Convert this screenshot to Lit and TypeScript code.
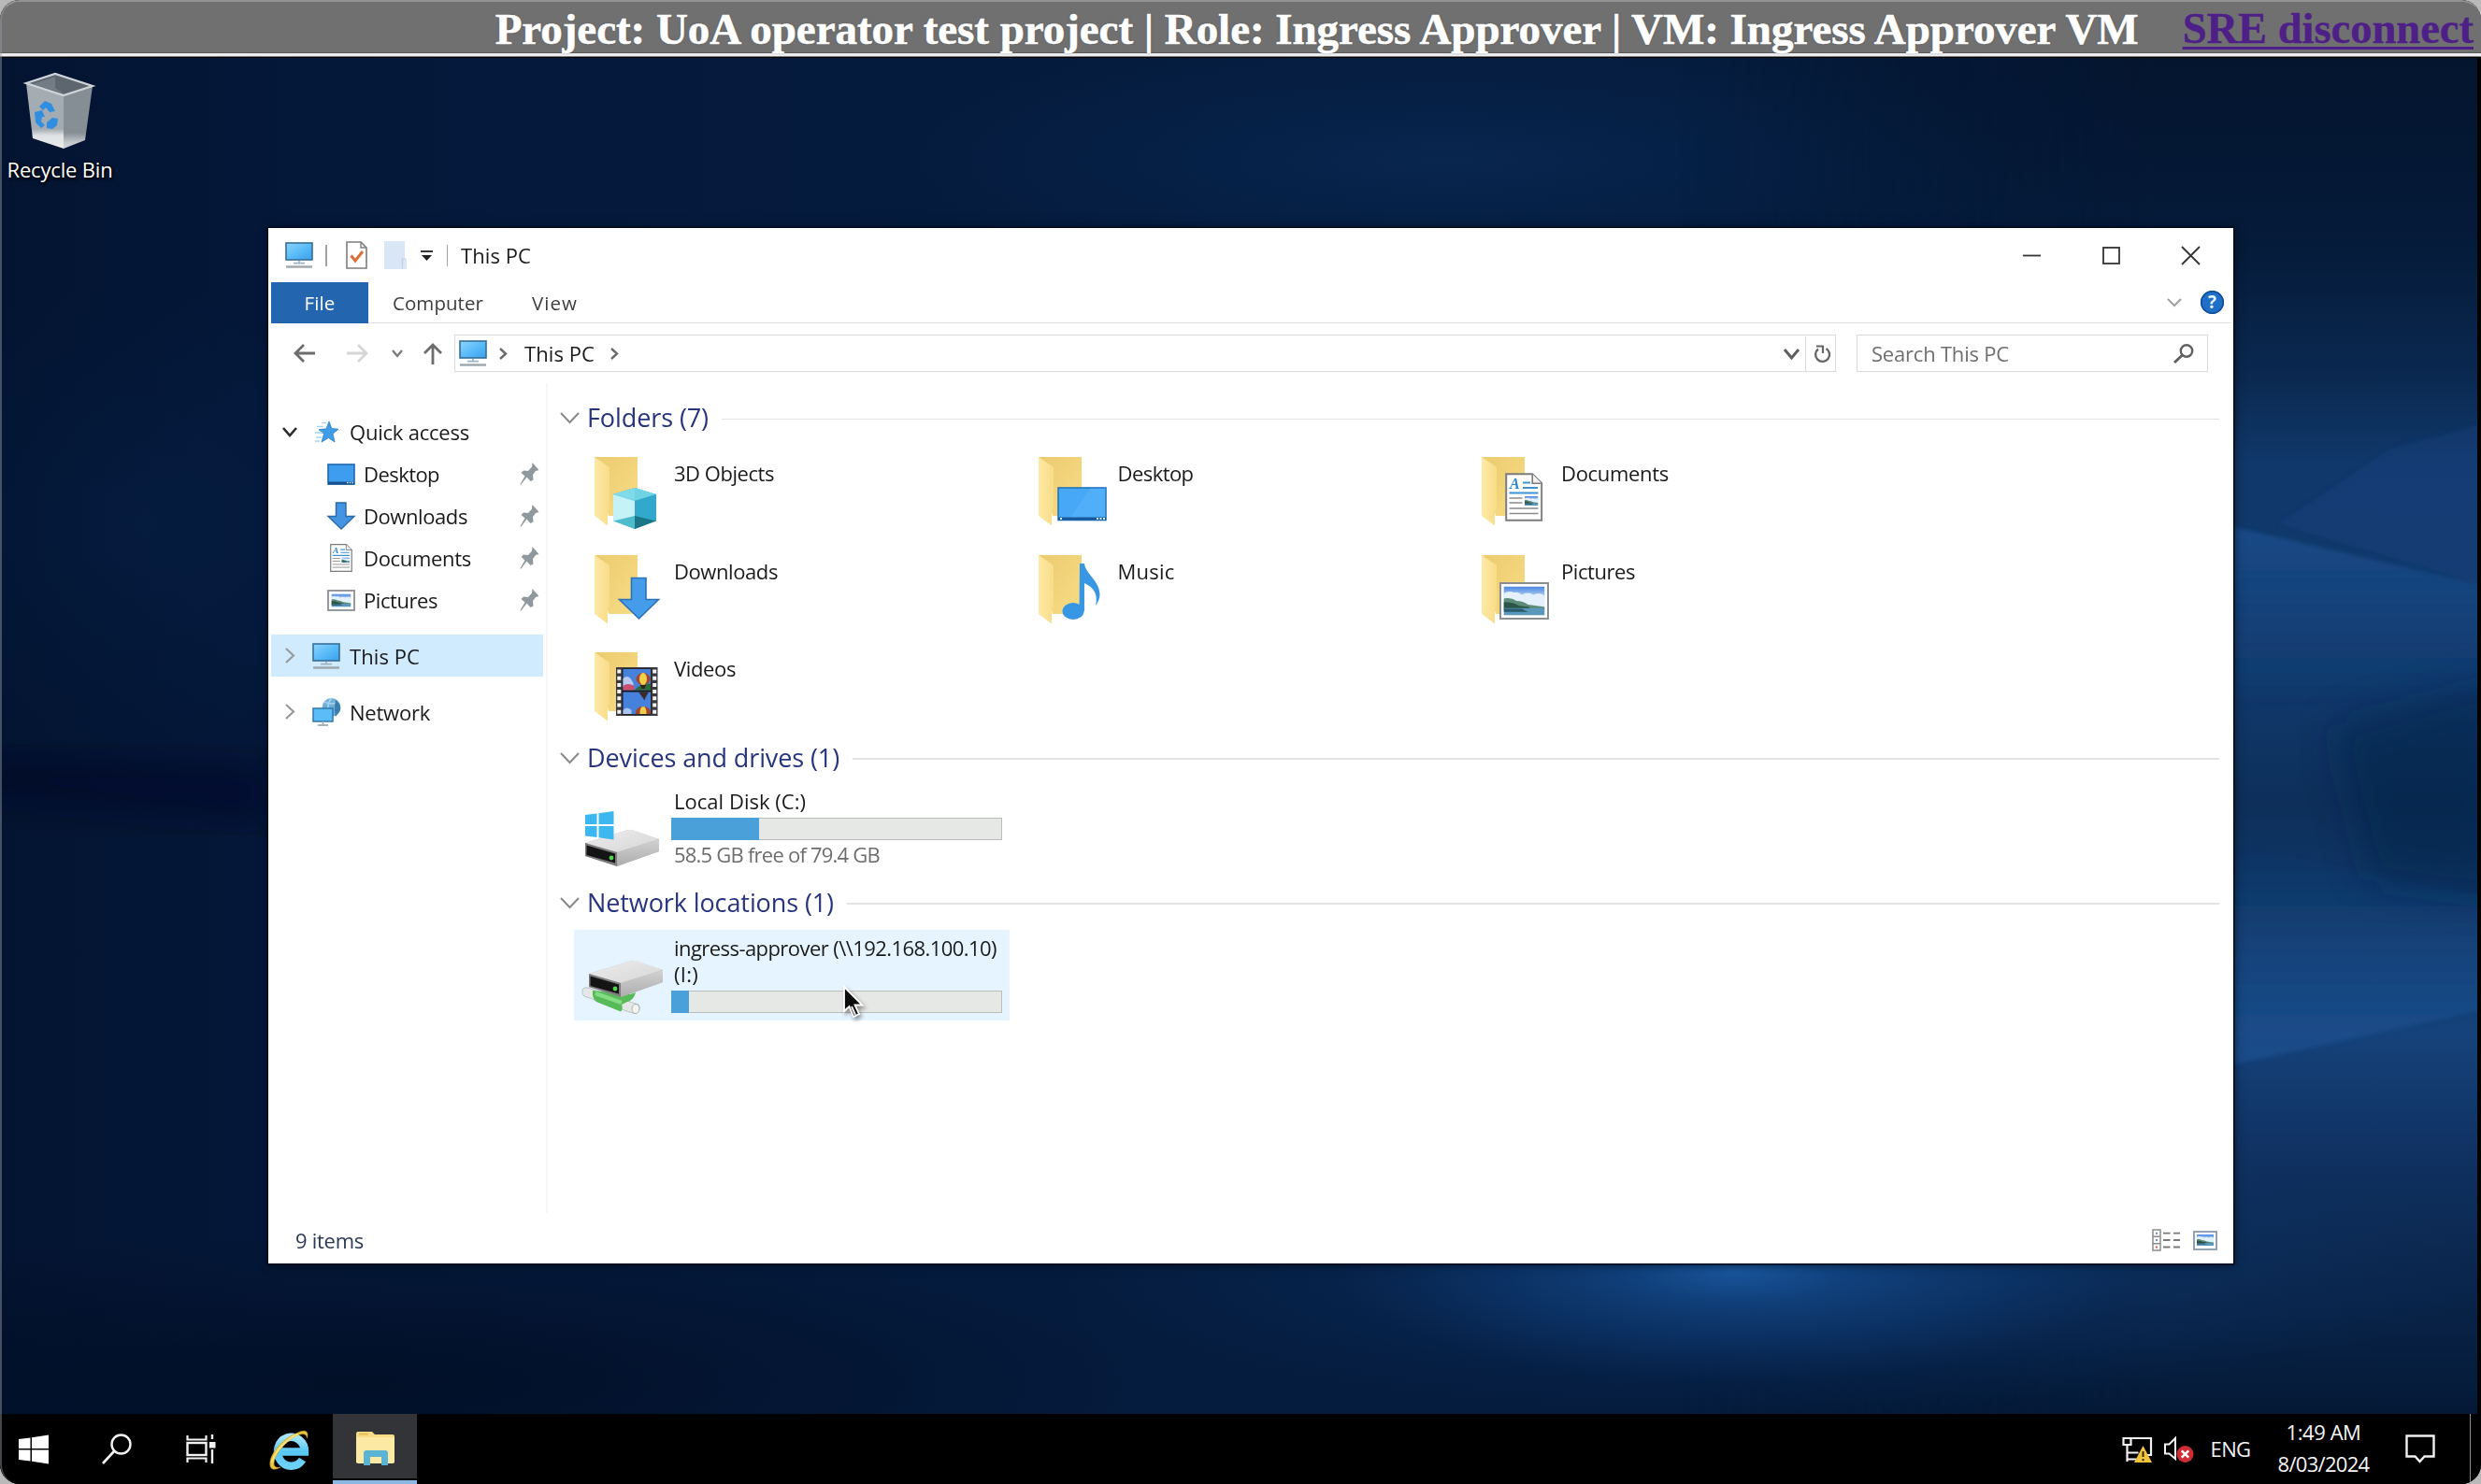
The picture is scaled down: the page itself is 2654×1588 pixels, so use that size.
import { LitElement, html, css, svg, nothing, TemplateResult } from "lit";
import { customElement, property, query } from "lit/decorators.js";

/* Single-line label that spreads its letters to fill a given width. */
@customElement("fit-text")
class FitText extends LitElement {
  @property({ type: Number }) w = 0;
  @property() text = "";
  @query(".t") el!: HTMLSpanElement;
  static styles = css`
    :host { display: inline-block; white-space: pre; }
    .t { display: inline-block; }
  `;
  firstUpdated() {
    const natural = this.el.getBoundingClientRect().width;
    if (this.w && natural) this.el.style.letterSpacing = `${(this.w - natural) / this.text.length}px`;
  }
  render() {
    return html`<span class="t">${this.text}</span>`;
  }
}

const fit = (text: string, w: number) => html`<fit-text .text=${text} .w=${w}></fit-text>`;

const icon = (w: number, h: number, body: unknown, vb = `0 0 ${w} ${h}`) =>
  html`<svg width=${w} height=${h} viewBox=${vb} fill="none" preserveAspectRatio="none" style="display:block;flex:none;overflow:visible">${body}</svg>`;

const pc = () => icon(30, 28, svg`
  <defs><linearGradient id="scr" x1="0" y1="0" x2="1" y2="1"><stop offset="0" stop-color="#8fd4fd"/><stop offset=".5" stop-color="#5bbcf8"/><stop offset="1" stop-color="#3aa0ec"/></linearGradient></defs>
  <rect x="1" y="1" width="28" height="18" fill="url(#scr)" stroke="#356f97" stroke-width="1.6"/>
  <path d="M15 20v2.500M9 22.600h12" stroke="#9fb4c2" stroke-width="1.800"/>
  <path d="M1 26.500h28" stroke="#9ba6ae" stroke-width="2.400"/>`);

const chevDown = (w: number, h: number, c: string, s: number) =>
  icon(w, h, svg`<path d="M1 1L${w / 2} ${h - 1}L${w - 1} 1" stroke=${c} stroke-width=${s}/>`);
const chevRight = (w: number, h: number, c: string, s: number) =>
  icon(w, h, svg`<path d="M1 1L${w - 1} ${h / 2}L1 ${h - 1}" stroke=${c} stroke-width=${s}/>`);

const arrow = (c: string, flip = false) =>
  icon(24, 20, svg`<path transform=${flip ? "translate(24 0) scale(-1 1)" : ""} d="M23 10H2M11 1L2 10l9 9" stroke=${c} stroke-width="2.800"/>`);

const landscape = (x: number, y: number, w: number, h: number) => svg`
  <svg x=${x} y=${y} width=${w} height=${h} viewBox="0 0 32 24" preserveAspectRatio="none">
    <defs><linearGradient id="sky" x1="0" y1="0" x2="0" y2="1"><stop offset="0" stop-color="#4a86e0"/><stop offset=".45" stop-color="#cfe6fa"/></linearGradient></defs>
    <rect width="32" height="24" fill="url(#sky)"/>
    <path d="M0 6q4-3 8-1q4-1 6 2q5-3 9 0q5-3 9 1v8H0z" fill="#e4f1fc"/>
    <path d="M0 10q6-1 10 2q5 0 9 3l13 2v2H0z" fill="#5d8c76"/>
    <path d="M0 13q8 0 12 3l8 1v2H0z" fill="#2c5548"/>
    <rect y="18" width="32" height="6" fill="#5a97bb"/><path d="M0 18.500h14l5 2.500H0z" fill="#2b5a6c"/>
  </svg>`;

const docBody = svg`
  <path d="M1.200 1.200h28l10 10v39.600h-38z" fill="#fff" stroke="#7c7c7c" stroke-width="2"/>
  <path d="M29.200 1.200v10h10" fill="#f0f0f0" stroke="#7c7c7c" stroke-width="1.600"/>
  <text x="5" y="17" font-family="Liberation Serif, serif" font-style="italic" font-weight="bold" font-size="16" fill="#2a86cf">A</text>
  <path d="M19 10.500h8M19 16h16M4.500 21.500h31" stroke="#3d93d3" stroke-width="2"/>
  <path d="M4.500 27h14M4.500 32h14M4.500 38h31M4.500 43.500h31" stroke="#8b8b8b" stroke-width="1.500"/>
  ${landscape(21, 25, 14.5, 10)}`;

const overlays: Record<string, unknown> = {
  "3D Objects": svg`
    <path d="M43 34L66 41V69L43 78 20 69V41z" fill="#38b4cf"/>
    <path d="M43 34L66 41 43 48 20 41z" fill="#6fd3e4"/>
    <path d="M20 41L43 48V66L20 70z" fill="#c5f2f6"/>
    <path d="M43 34L20 41 43 47z" fill="#7fdbe8"/>
    <path d="M66 41L43 48V64L66 70z" fill="#32a9cc"/>
    <path d="M20 69.500L43 64V78z" fill="#4fbccb"/><path d="M66 69.500L43 64V78z" fill="#197587"/>`,
  Desktop: svg`
    <rect x="21" y="34" width="51" height="34.500" fill="#46a8f6" stroke="#2273b8" stroke-width="1.600"/>
    <path d="M34 66L55 34.800h16.400V66z" fill="#5ab4fa" opacity=".55"/>
    <path d="M21 67h51" stroke="#17599a" stroke-width="3"/><path d="M62 67h9" stroke="#d5ecff" stroke-width="2" stroke-dasharray="2 1.500"/><path d="M23 67h2" stroke="#d5ecff" stroke-width="2"/>`,
  Documents: svg`<svg x="25" y="18" width="40.500" height="52" viewBox="0 0 40.500 52">${docBody}</svg>`,
  Downloads: svg`<path d="M39.500 25.500h15.500v23h13.500L47.500 69 26.500 48.500h13z" fill="#459ceb" stroke="#2d71b5" stroke-width="1.600"/>`,
  Music: svg`<ellipse cx="37" cy="61" rx="11.500" ry="9" fill="#3797e4"/><path d="M44 10h5C50 21 65 28 65.500 43q0 6-4.500 12Q65 38 49 31V61H43.500z" fill="#3797e4"/>`,
  Pictures: svg`<rect x="20" y="31" width="51" height="38" fill="#fff" stroke="#8b8f94" stroke-width="2"/>${landscape(23.500, 34.500, 44, 31)}`,
  Videos: svg`
    <rect x="23" y="17" width="44.500" height="52" fill="#3a3a3e"/>
    <path d="M26.300 19.500V68M64.200 19.500V68" stroke="#f2f2f2" stroke-width="4" stroke-dasharray="4 3.200"/>
    <rect x="29.500" y="18.500" width="31" height="49" fill="#15151a"/>
    <rect x="30.500" y="19" width="29.500" height="22.500" fill="#4682dc"/><rect x="30.500" y="43.500" width="29.500" height="23.500" fill="#4682dc"/>
    <path d="M30.500 29q4-4 8 0l3 5v4h-11z" fill="#b9c9f0"/><path d="M30.500 37q5-4 12 0v4.500h-12z" fill="#c8506a"/><path d="M43 41.500q6-8 17-7v7z" fill="#2e6b3c"/>
    <ellipse cx="52" cy="29.500" rx="7.500" ry="6.500" fill="#a8442c"/><ellipse cx="52" cy="29.500" rx="4" ry="6.500" fill="#f0d04a"/><path d="M49 36h6l-1.500 4h-3z" fill="#2f2418"/>
    <path d="M47 43.500h11l-3.500 6-1 3-2-3z" fill="#3b2a2c"/>
    <path d="M30.500 63q4-5 9 0v4h-9z" fill="#a9c4f2"/><path d="M44 67q0-8 8-8t8 8z" fill="#a8442c"/><path d="M48.500 67q0-8 3.500-8t3.500 8z" fill="#f0d04a"/>`,
};

const folder = (name: string) => icon(80, 80, svg`
  <defs>
    <linearGradient id="fb" x1="0" y1="0" x2="1" y2="1"><stop offset="0" stop-color="#eccb70"/><stop offset="1" stop-color="#f7dc85"/></linearGradient>
    <linearGradient id="ff" x1="0" y1="0" x2="1" y2="0"><stop offset="0" stop-color="#fde9a6"/><stop offset="1" stop-color="#f8dd88"/></linearGradient>
  </defs>
  <path d="M0 1H46V64H15z" fill="url(#fb)"/>
  <path d="M0 1L16 12V56l-2 4v14.500L0 64z" fill="url(#ff)"/>
  ${overlays[name]}`);

const driveBody = svg`
  <defs><linearGradient id="dt" x1="0" y1="0" x2="1" y2="1"><stop offset="0" stop-color="#ededed"/><stop offset="1" stop-color="#d6d6d6"/></linearGradient>
  <linearGradient id="ds" x1="0" y1="0" x2="0" y2="1"><stop offset="0" stop-color="#d2d2d2"/><stop offset="1" stop-color="#adadad"/></linearGradient></defs>
  <path d="M0 14L46 0 79 10V23L34 39 0 28z" fill="#b4b4b4"/>
  <path d="M0 14L46 0Q50 -1 54 1L79 10 34 24z" fill="url(#dt)"/>
  <path d="M34 24L79 10V23L34 39z" fill="url(#ds)"/>
  <path d="M0 14L34 24V39L0 28z" fill="#7c7c7c"/>
  <path d="M1.500 16.500L32 25.500V35.500L1.500 27z" fill="#141414"/>
  <circle cx="28" cy="30" r="2.400" fill="#4fd64a"/>`;

const localDrive = icon(80, 60, svg`
  <g transform="translate(0 20)">${driveBody}</g>
  <path d="M0 4L12.500 2.500V14H0zM14.500 2.200L30.500 0V14H14.500zM0 16h12.500V28L0 26.500zM14.500 16h16V30.500L14.500 28.300z" fill="#3cb7ef"/>`);

const netDrive = icon(88, 58, svg`
  <path d="M1 31q1-3 6-2l54 18q3 5-2 9-3 1-6-.5L3 38q-3-2-2-7z" fill="#e4e8e6" stroke="#bcc3bf" stroke-width="1"/>
  <path d="M12 32l40 4 6-2q-2 8-9 10l-6 3q2 5-1 7.500L16 44q-5-4-4-12z" fill="#56bb58"/><path d="M15 35l28 10" stroke="#86dc84" stroke-width="4"/>
  <ellipse cx="58" cy="51.500" rx="4" ry="5" fill="#f4f6f5" stroke="#a9b0ac"/>
  <g transform="translate(8 0)">${driveBody}</g>`);

const pin = icon(21, 26, svg`<path d="M13.500 1l7 8-3.500 1-3 4 .500 5.500-3 1.500-4-4.500L1 25l-.5-1 5-8.500L1.500 12 4 9.500l5 .500 4-4.500z" fill="#8f989c"/>`);

const nav: Record<string, TemplateResult> = {
  Desktop: icon(30, 23, svg`<rect x="1" y="1" width="28" height="21" fill="#3f9df0" stroke="#1f68ae" stroke-width="1.600"/><path d="M1 21h28" stroke="#16508c" stroke-width="3"/><path d="M21 20.500h7" stroke="#cfe8ff" stroke-width="1.500" stroke-dasharray="1.500 1.200"/>`),
  Downloads: icon(30, 30, svg`<path d="M9.500 1h10.500v14.500h9L15 29 1 15.500h8.500z" fill="#4594e4" stroke="#2c69a8" stroke-width="1.400"/>`),
  Documents: icon(24, 30, docBody, "0 0 40.500 52"),
  Pictures: icon(30, 23, svg`<rect x="1" y="1" width="28" height="21" fill="#fff" stroke="#8b8f94" stroke-width="1.800"/>${landscape(4.5, 4.5, 21, 14)}`),
};

const star = icon(26, 22, svg`<path d="M16 0l2.800 7.500L26 8.200l-6 5L22 22 15.500 17.500 8 22l2.500-8.500L5 8.600l8-.8z" fill="#3f9ce6" stroke="#2b7dc4" stroke-width=".8"/><path d="M3 5.500h7M1 12h8M2 17h6M8 1.500h5M1 21h5" stroke="#a5d5f5" stroke-width="1.400"/>`);

const network = icon(31, 31, svg`
  <circle cx="20.500" cy="11" r="10" fill="#6fb0d8"/><path d="M20.500 1q-7 9 0 20M13 5q8 4 15 0" stroke="#a9d5ee" stroke-width="1.500"/><path d="M25 3q6 4 5 11l-5 7q-2-8 0-18z" fill="#3c7fae"/>
  <rect x="1" y="12" width="21" height="14" fill="#5bbcf8" stroke="#2f77a8" stroke-width="1.500"/><path d="M11.500 26v3M6 30h11" stroke="#a8b4bb" stroke-width="2"/>`);

const recycleBin = icon(74, 82, svg`
  <defs><linearGradient id="b1" x1="0" y1="0" x2="0" y2="1"><stop offset="0" stop-color="#a5adb3"/><stop offset=".7" stop-color="#a2abb1"/><stop offset=".8" stop-color="#dfe2e4"/><stop offset="1" stop-color="#e8eaeb"/></linearGradient>
  <linearGradient id="b2" x1="0" y1="0" x2="0" y2="1"><stop offset="0" stop-color="#858e95"/><stop offset=".75" stop-color="#868f96"/><stop offset=".9" stop-color="#c4c8cb"/><stop offset="1" stop-color="#d5d8da"/></linearGradient></defs>
  <path d="M1 11L32 1 72 14 41 24z" fill="#5d666e"/><path d="M8 12L32 4v12l9 6z" fill="#737c84"/>
  <path d="M1 11L41 24V81L8 70z" fill="url(#b1)"/><path d="M72 14L41 24V81L64 72z" fill="url(#b2)"/>
  <path d="M1 11L32 1 72 14 41 24z" stroke="#cfd4d8" stroke-width="2.200"/>
  <path d="M15 36l6-6 7 3 4 8-6 1-4-5-3 3z" fill="#2f8ee0"/>
  <path d="M10 42l8-2 3 7-3 0-1 5 4 4-4 3-6-6z" fill="#2f8ee0"/>
  <path d="M23 53l6-5 6 1-1 7-5 4-6-1z" fill="#2f8ee0"/>`);

interface Drive { lines: string[]; widths: number[]; used: number; free?: string; icon: TemplateResult; hot?: boolean }

@customElement("drive-tile")
class DriveTile extends LitElement {
  @property({ attribute: false }) drive!: Drive;
  static styles = css`
    :host { display: block; }
    .tile { box-sizing: border-box; width: 466px; height: 97px; display: flex; font-size: 22px; line-height: 28px; color: #1a1a1a; }
    .hot { background: #e5f4fe; }
    .pic { width: 104px; padding-left: 12px; padding-top: 28px; box-sizing: border-box; flex: none; }
    .hot .pic { padding-left: 8px; padding-top: 33px; }
    .info { width: 354px; padding-top: 3px; }
    .hot .info { padding-top: 5px; }
    .line { height: 28px; padding-left: 3px; }
    .bar { box-sizing: border-box; height: 24px; margin-top: 4px; border: 1.5px solid #bcbcbc; background: #e6e8e5; display: flex; }
    .fill { background: #4aa1d9; margin: -1px 0 -1px -1px; }
    .free { color: #6d6d6d; padding: 1px 0 0 3px; height: 28px; }
  `;
  render() {
    const d = this.drive;
    return html`<div class="tile ${d.hot ? "hot" : ""}">
      <div class="pic">${d.icon}</div>
      <div class="info">
        ${d.lines.map((l, i) => html`<div class="line">${fit(l, d.widths[i])}</div>`)}
        <div class="bar"><div class="fill" style="width:${d.used}%"></div></div>
        ${d.free ? html`<div class="free">${fit(d.free, 220)}</div>` : nothing}
      </div>
    </div>`;
  }
}

const group = (title: string, w: number) => html`<div class="group">
  ${chevDown(21, 12, "#8a8a8a", 2)}<span class="gtitle">${fit(title, w)}</span><span class="rule"></span></div>`;

const wallpaper = html`<svg class="wall" viewBox="0 61 2654 1452" preserveAspectRatio="none">
  <defs>
    <linearGradient id="base" x1="0" y1="0" x2="1" y2="0">
      <stop offset="0" stop-color="#031431"/><stop offset=".12" stop-color="#04183a"/><stop offset=".5" stop-color="#051c3e"/><stop offset="1" stop-color="#051c3d"/>
    </linearGradient>
    <linearGradient id="east" x1="0" y1="0" x2="0" y2="1">
      <stop offset="0" stop-color="#04152e"/><stop offset=".14" stop-color="#051b3a"/><stop offset=".23" stop-color="#0a284f"/><stop offset=".3" stop-color="#10386a"/><stop offset=".45" stop-color="#113a6d"/><stop offset=".55" stop-color="#0d2f5a"/><stop offset=".64" stop-color="#113a6c"/><stop offset=".72" stop-color="#15427a"/><stop offset=".8" stop-color="#103364"/><stop offset=".88" stop-color="#0b2850"/><stop offset="1" stop-color="#041936"/>
    </linearGradient>
    <linearGradient id="fade" x1="0" y1="0" x2="1" y2="0"><stop offset="0" stop-color="#000"/><stop offset="1" stop-color="#fff"/></linearGradient>
    <mask id="em" maskUnits="userSpaceOnUse" x="1800" y="61" width="854" height="1452"><rect x="1800" y="61" width="500" height="1452" fill="url(#fade)"/><rect x="2300" y="61" width="354" height="1452" fill="#fff"/></mask>
    <linearGradient id="beam" x1="0" y1="0" x2="0" y2="1"><stop offset="0" stop-color="#20569a" stop-opacity=".6"/><stop offset="1" stop-color="#1c5090" stop-opacity="0"/></linearGradient>
    <linearGradient id="beam2" x1="0" y1="1" x2="0" y2="0"><stop offset="0" stop-color="#1f5698" stop-opacity=".6"/><stop offset="1" stop-color="#1c5090" stop-opacity="0"/></linearGradient>
    <radialGradient id="glow"><stop offset="0" stop-color="#1f63b0" stop-opacity=".95"/><stop offset=".3" stop-color="#154c8e" stop-opacity=".6"/><stop offset="1" stop-color="#0c3a78" stop-opacity="0"/></radialGradient>
    <radialGradient id="soft"><stop offset="0" stop-color="#134a8c" stop-opacity=".85"/><stop offset="1" stop-color="#0c3a78" stop-opacity="0"/></radialGradient>
    <radialGradient id="dark"><stop offset="0" stop-color="#010d22" stop-opacity=".8"/><stop offset="1" stop-color="#010d22" stop-opacity="0"/></radialGradient>
    <filter id="blur" x="-20%" y="-20%" width="140%" height="140%"><feGaussianBlur stdDeviation="20"/></filter>
    <filter id="blur3" x="-5%" y="-5%" width="110%" height="110%"><feGaussianBlur stdDeviation="2"/></filter>
  </defs>
  <rect y="61" width="2654" height="1452" fill="url(#base)"/>
  <ellipse cx="1550" cy="170" rx="620" ry="130" fill="url(#soft)" opacity=".25"/>
  <ellipse cx="150" cy="560" rx="330" ry="260" fill="url(#soft)" opacity=".12"/>
  <g filter="url(#blur)">
    <path d="M-40 810L290 820V880L-40 850z" fill="#010c20" opacity=".5"/>
  </g>
  <rect x="1800" y="61" width="854" height="1452" fill="url(#east)" mask="url(#em)"/>
  <g filter="url(#blur3)">
    <path d="M2380 560L2670 628V740L2380 760z" fill="url(#beam)"/>
    <path d="M2440 560L2560 480 2670 450V628z" fill="#174684" opacity=".35"/>
    <path d="M2380 1142L2670 1078V960L2380 900z" fill="url(#beam2)"/>
  </g>
  <g filter="url(#blur)"><path d="M2500 780L2680 730V960L2540 940z" fill="#082346" opacity=".5"/></g>
  <ellipse cx="1860" cy="1360" rx="420" ry="120" fill="url(#glow)"/>
  <ellipse cx="1900" cy="1360" rx="760" ry="150" fill="url(#soft)" opacity=".55"/>
  <ellipse cx="380" cy="1480" rx="860" ry="160" fill="url(#dark)"/>
</svg>`;

@customElement("app-root")
class AppRoot extends LitElement {
  static styles = css`
    :host { display: block; width: 2654px; height: 1588px; background: #b9b9b9; }
    svg { display: block; flex: none; }
    .frame { position: relative; width: 2654px; height: 1588px; display: flex; flex-direction: column; overflow: hidden; border-radius: 21px; background: #000; font-family: "Open Sans", "Noto Sans", sans-serif; font-size: 22px; line-height: 30px; color: #1a1a1a; }
    .edge { position: absolute; inset: 0; border-radius: 21px; border-left: 2px solid rgba(150, 155, 165, .45); border-top: 2px solid rgba(170, 170, 170, .6); box-sizing: border-box; pointer-events: none; }
    .top { box-sizing: border-box; height: 61px; background: #707070; border-bottom: 1px solid #777; display: flex; justify-content: flex-end; align-items: flex-start; padding-right: 8px; box-shadow: inset 0 -3px 0 #ededf1, inset 0 -4px 0 #5a5a5a; font: bold 47px/62px "Liberation Serif", serif; color: #fff; gap: 47px; text-shadow: 0 0 2px rgba(60, 60, 60, .7); flex: none; }
    .top .heading { -webkit-text-stroke: .6px #fff; }
    .link { color: #4e1f87; -webkit-text-stroke: .4px #4e1f87; text-shadow: none; text-decoration: underline; text-decoration-thickness: 3px; text-underline-offset: 4px; font-size: 46.500px; }
    .desk { position: relative; height: 1452px; flex: none; margin-right: 4px; overflow: hidden; border-top: 1px solid #000; box-sizing: border-box; }
    .wall { position: absolute; left: 0; top: 0; width: 100%; height: 100%; }
    .bin { position: relative; width: 128px; padding-top: 16px; display: flex; flex-direction: column; align-items: center; gap: 5px; color: #fff; text-shadow: 1px 2px 3px #000, 0 0 3px #000; line-height: 32px; }
    .win { position: absolute; left: 287px; top: 182px; width: 2102px; height: 1108px; background: #fff; display: flex; flex-direction: column; box-shadow: 0 0 0 1.5px #020a1c, 1px 1px 10px rgba(0, 0, 0, .6); }
    .title { height: 58px; flex: none; display: flex; align-items: center; padding: 0 3px 0 18px; }
    .vsep { width: 1.5px; height: 23px; background: #a2a2a2; }
    .spacer { flex: 1; }
    .ctl { width: 85px; display: flex; justify-content: center; }
    .ribbon { height: 44px; flex: none; box-sizing: border-box; display: flex; align-items: center; border-bottom: 1.5px solid #dcdddd; margin: 0 3px; padding-right: 7px; font-size: 20.500px; color: #3d3d3d; }
    .file { width: 104px; height: 44px; background: #2465b0; color: #fff; display: flex; align-items: center; justify-content: center; margin-right: 26px; }
    .help { width: 25px; height: 25px; border-radius: 50%; background: #1f6fc6; box-shadow: inset 0 0 0 1.5px #0c4c9a; color: #e9f5ff; font: bold 19px/25px "Open Sans", sans-serif; text-align: center; margin-left: 20px; }
    .nav { height: 64px; flex: none; display: flex; align-items: center; padding: 0 25px 0 27px; }
    .box { box-sizing: border-box; height: 40px; border: 1.5px solid #d9d9d9; display: flex; align-items: center; }
    .addr { width: 1478px; margin-left: 12px; padding-left: 4px; }
    .addr .div { width: 1.5px; height: 37px; background: #d9d9d9; margin: 0 9px 0 6px; }
    .search { width: 376px; margin-left: 22px; padding: 0 14px 0 15px; color: #6f6f6f; justify-content: space-between; }
    .body { flex: 1; display: flex; min-height: 0; }
    .side { width: 299px; flex: none; box-sizing: border-box; border-right: 2px solid #f6f6f6; padding: 30px 0 0 3px; display: flex; flex-direction: column; height: 888px; }
    .row { height: 44.900px; width: 291px; box-sizing: border-box; display: flex; align-items: center; }
    .row .tw { width: 18px; margin-left: 11px; display: flex; justify-content: center; }
    .row .ic { width: 32px; display: flex; justify-content: center; }
    .row.lead .ic { margin-left: 14px; margin-right: 9px; }
    .row.child { padding-left: 59px; padding-right: 4px; }
    .row.child .ic { margin-right: 8px; }
    .row.gap { margin-top: 15px; }
    .row.sel { background: #cfebfd; }
    .main { flex: 1; padding: 15px 15px 0 13px; }
    .group { height: 44px; display: flex; align-items: center; }
    .gtitle { font-size: 27px; line-height: 44px; color: #27357f; margin: 0 14px 0 8px; }
    .rule { flex: 1; height: 1.500px; background: #e3e3e3; margin-top: 3px; }
    .grid { display: grid; grid-template-columns: repeat(3, 474.500px); grid-auto-rows: 104.500px; padding-left: 15px; margin-bottom: 6px; }
    .tile { display: flex; padding: 19px 0 0 22px; }
    .tile .name { margin: 3px 0 0 5px; }
    .drives { padding: 7px 0 7px 15px; }
    .status { height: 48px; flex: none; display: flex; align-items: center; padding: 0 17px 2px 29px; box-sizing: border-box; gap: 13px; color: #2b3a55; }
    .cursor { position: absolute; left: 902px; top: 993px; filter: drop-shadow(2px 3px 2px rgba(0, 0, 0, .4)); }
    .task { height: 75px; flex: none; background: #000; display: flex; color: #f4f4f4; align-items: center; }
    .app { width: 90px; height: 75px; display: flex; align-items: center; justify-content: center; }
    .app.on { position: relative; background: #333438; box-sizing: border-box; border-bottom: 4px solid #8cb7e3; box-shadow: inset 0 -2px 0 #000; padding-top: 3px; }
    .tray { display: flex; align-items: center; }
    .clock { width: 130px; text-align: center; line-height: 34px; margin: 0 22px 3px 13px; }
    .lang { margin-bottom: 2px; }
    .peek { width: 1.500px; height: 75px; background: #8b8b8b; margin: 0 11px 0 37px; }
  `;

  private child(name: string, w: number) {
    return html`<div class="row child"><span class="ic">${nav[name]}</span>${fit(name, w)}<span class="spacer"></span>${pin}</div>`;
  }

  render() {
    const folders: [string, number][] = [["3D Objects", 107], ["Desktop", 81], ["Documents", 115], ["Downloads", 111], ["Music", 61], ["Pictures", 79], ["Videos", 66]];
    const local: Drive = { lines: ["Local Disk (C:)"], widths: [141], used: 26.8, free: "58.5 GB free of 79.4 GB", icon: localDrive };
    const net: Drive = { lines: ["ingress-approver (\\\\192.168.100.10)", "(I:)"], widths: [345, 26], used: 5.5, icon: netDrive, hot: true };
    return html`<div class="frame">
      <div class="top">
        <span class="heading">${fit("Project: UoA operator test project | Role: Ingress Approver | VM: Ingress Approver VM", 1758)}</span>
        <span class="link">SRE disconnect</span>
      </div>
      <div class="desk">
        ${wallpaper}
        <div class="bin">${recycleBin}${fit("Recycle Bin", 113)}</div>
        <div class="win">
          <div class="title">
            ${pc()}
            <span class="vsep" style="margin:0 20px 0 13px"></span>
            ${icon(23, 30, svg`<path d="M1 1h15l6 6v22H1z" fill="#fff" stroke="#7d7d7d" stroke-width="1.600"/><path d="M16 1v6h6" stroke="#7d7d7d" stroke-width="1.400"/><path d="M5.500 15.500l4.500 5.500 8-10" stroke="#dc6f35" stroke-width="3"/>`)}
            <span style="width:18px"></span>
            ${icon(24, 30, svg`<path d="M0 0h22v19h2v11H0z" fill="#d9e6f6"/><path d="M19.500 29.500V19h4" stroke="#bfd0e6" stroke-width="1.200"/>`)}
            <span style="width:15px"></span>
            ${icon(13, 11, svg`<path d="M0 1h13" stroke="#222" stroke-width="1.800"/><path d="M1 5h11l-5.500 6z" fill="#222"/>`)}
            <span class="vsep" style="margin:0 14px 0 15px"></span>
            ${fit("This PC", 75)}
            <span class="spacer"></span>
            <span class="ctl">${icon(19, 19, svg`<path d="M0 9.500h19" stroke="#333" stroke-width="1.800"/>`)}</span>
            <span class="ctl">${icon(19, 19, svg`<rect x="1" y="1" width="17" height="17" stroke="#333" stroke-width="1.800"/>`)}</span>
            <span class="ctl">${icon(19, 19, svg`<path d="M0 0l19 19M19 0L0 19" stroke="#333" stroke-width="1.800"/>`)}</span>
          </div>
          <div class="ribbon">
            <span class="file">${fit("File", 33)}</span>
            ${fit("Computer", 97)}<span style="width:52px"></span>${fit("View", 49)}
            <span class="spacer"></span>
            ${chevDown(16, 9, "#a0a0a0", 2)}
            <span class="help">?</span>
          </div>
          <div class="nav">
            ${arrow("#6c6c6c")}<span style="width:32px"></span>${arrow("#d6d6d6", true)}
            <span style="width:25px"></span>${chevDown(12, 8, "#7b7b7b", 2.4)}
            <span style="width:21px"></span>
            ${icon(22, 23, svg`<path d="M11 23V2M2 11l9-9 9 9" stroke="#6c6c6c" stroke-width="2.800"/>`)}
            <div class="box addr">
              ${pc()}<span style="width:13px"></span>${chevRight(8, 13, "#6b6b6b", 2.4)}<span style="width:19px"></span>
              ${fit("This PC", 75)}<span style="width:17px"></span>${chevRight(8, 13, "#6b6b6b", 2.4)}
              <span class="spacer"></span>
              ${chevDown(17, 11, "#5f5f5f", 3)}<span class="div"></span>
              ${icon(18, 19, svg`<path d="M4 4.500A7.500 7.500 0 1 0 12.500 4" stroke="#666" stroke-width="2.400"/><path d="M2 1.500h7v7.500" stroke="#666" stroke-width="2.200"/>`)}
              <span style="width:4px"></span>
            </div>
            <div class="box search">${fit("Search This PC", 147)}
              ${icon(22, 21, svg`<circle cx="14" cy="7.500" r="6.200" stroke="#5f5f5f" stroke-width="2.400"/><path d="M9.500 12L1 20" stroke="#5f5f5f" stroke-width="3"/>`)}
            </div>
          </div>
          <div class="body">
            <div class="side">
              <div class="row lead"><span class="tw">${chevDown(16, 10, "#2b2b2b", 2.6)}</span><span class="ic">${star}</span>${fit("Quick access", 128)}</div>
              ${this.child("Desktop", 81)}${this.child("Downloads", 111)}${this.child("Documents", 115)}${this.child("Pictures", 79)}
              <div class="row lead gap sel"><span class="tw">${chevRight(10, 17, "#9a9a9a", 2.2)}</span><span class="ic">${pc()}</span>${fit("This PC", 75)}</div>
              <div class="row lead gap"><span class="tw">${chevRight(10, 17, "#9a9a9a", 2.2)}</span><span class="ic">${network}</span>${fit("Network", 86)}</div>
            </div>
            <div class="main">
              ${group("Folders (7)", 130)}
              <div class="grid">${folders.map(([n, w]) => html`<div class="tile">${folder(n)}<span class="name">${fit(n, w)}</span></div>`)}</div>
              ${group("Devices and drives (1)", 270)}
              <div class="drives"><drive-tile .drive=${local}></drive-tile></div>
              ${group("Network locations (1)", 264)}
              <div class="drives"><drive-tile .drive=${net}></drive-tile></div>
            </div>
          </div>
          <div class="status">${fit("9 items", 73)}<span class="spacer"></span>
            ${icon(31, 24, svg`<rect x="1" y="1" width="8" height="22" stroke="#8c8c8c" stroke-width="1.500"/><path d="M1 8.300h8M1 15.700h8" stroke="#8c8c8c" stroke-width="1.500"/><path d="M4 4.700h2M4 12h2" stroke="#6a8fc0" stroke-width="2"/><path d="M4 19.500h2" stroke="#d05a3a" stroke-width="2"/><path d="M12 4.700h18M12 12h18M12 19.500h18" stroke="#7a7a7a" stroke-width="1.800" stroke-dasharray="7.500 3.500"/>`)}
            ${icon(26, 21, svg`<rect x="1" y="1" width="24" height="19" fill="#fff" stroke="#8799ab" stroke-width="1.800"/>${landscape(4, 4, 18, 12)}`)}
          </div>
        </div>
        <div class="cursor">${icon(23, 36, svg`<path d="M1 1v26l5.500-5 4.500 11 6-3-4.500-9.500h8z" fill="#0b0b0b" stroke="#fff" stroke-width="1.800"/><path d="M9 22l4 9" stroke="#e8e8e8" stroke-width="2"/>`)}</div>
      </div>
      <div class="task">
        <span class="app" style="width:71px">${icon(32, 32, svg`<path d="M0 5L12.500 3.500V15H0zM14 3.200L32 0.500V15H14zM0 16.500h12.500V28.500L0 27zM14 16.500h18V31.500L14 28.800z" fill="#fff"/>`)}</span>
        <span class="app" style="width:108px">${icon(32, 33, svg`<circle cx="20.500" cy="11.500" r="10" stroke="#f2f2f2" stroke-width="2.400"/><path d="M13 19L1 32" stroke="#f2f2f2" stroke-width="2.600"/>`)}</span>
        <span class="app" style="width:72px">${icon(32, 31, svg`<path d="M1.500 1v4.500h20V1M1.500 30v-4.500h20V30" stroke="#f2f2f2" stroke-width="2.200"/><rect x="1.500" y="9" width="20" height="13" stroke="#f2f2f2" stroke-width="2.400"/><path d="M28 0v5M28 16v15" stroke="#f2f2f2" stroke-width="2.400"/><rect x="25" y="8" width="6.500" height="6.500" fill="#f2f2f2"/>`)}</span>
        <span class="app" style="width:105px;padding-left:13px;box-sizing:border-box">${icon(44, 44, svg`
          <defs><linearGradient id="ie" x1="0" y1="0" x2="0" y2="1"><stop offset="0" stop-color="#a5e6fb"/><stop offset=".5" stop-color="#57c6f2"/><stop offset="1" stop-color="#6ed2f7"/></linearGradient></defs>
          <path d="M11.500 24.500H38A14.500 15.500 0 1 0 35.500 33" stroke="url(#ie)" stroke-width="8.500"/>
          <path d="M30 4.500C37 .5 43 1.500 40.500 10 40 3.500 33 5 26 9 15 16 5 29 5 37c0 4 3 5 7 4C4 45.500 0 43 1 35 2.500 24 17 9 30 4.500z" fill="#e9c440" stroke="#c99b1e" stroke-width=".6"/>
          <path d="M3 36C5 25 18 11 31 5.500" stroke="#f8e27c" stroke-width="2.200"/>`)}</span>
        <span class="app on">${icon(43, 38, svg`
          <path d="M1 3q0-2 2-2h15l3 3h19q2 0 2 2v28H1z" fill="#f7dd88"/><path d="M1 7h41v26q0 2-2 2H3q-2 0-2-2z" fill="#fce9a4"/><path d="M4 3.500h10" stroke="#e7bd55" stroke-width="2"/>
          <path d="M9 37V24q0-3 3-3h20q3 0 3 3v13h-7v-9H16v9z" fill="#5bb4d3"/>`)}</span>
        <span class="spacer"></span>
        <div class="tray">
          ${icon(32, 30, svg`<path d="M10 3h21v18H20M1.500 3h8v7h-8zM5.500 10v18M5.500 18.500h12M5.500 25.500h10" stroke="#f2f2f2" stroke-width="2.200"/><path d="M22.500 11L32 29H13z" fill="#f2c33d"/><path d="M22.500 17v6M22.500 25v2.200" stroke="#3b2c05" stroke-width="2"/>`)}
          <span style="width:13px"></span>
          ${icon(32, 30, svg`<path d="M1 9.500h4.500L12 3v22l-6.500-5.500H1z" stroke="#f2f2f2" stroke-width="2"/><circle cx="22.500" cy="20" r="9" fill="#cf2e36"/><path d="M18.800 16.300l7.400 7.400M26.200 16.300l-7.400 7.400" stroke="#fff" stroke-width="2.400"/>`)}
          <span style="width:18px"></span>
          <span class="lang">${fit("ENG", 43)}</span>
          <div class="clock"><div>${fit("1:49 AM", 80)}</div><div>${fit("8/03/2024", 98)}</div></div>
          ${icon(32, 31, svg`<path d="M1.500 1.500h29v22H20.500l-5 5.500-5-5.500h-9z" stroke="#f2f2f2" stroke-width="2.400"/>`)}
          <span class="peek"></span>
        </div>
      </div>
      <div class="edge"></div>
    </div>`;
  }
}
